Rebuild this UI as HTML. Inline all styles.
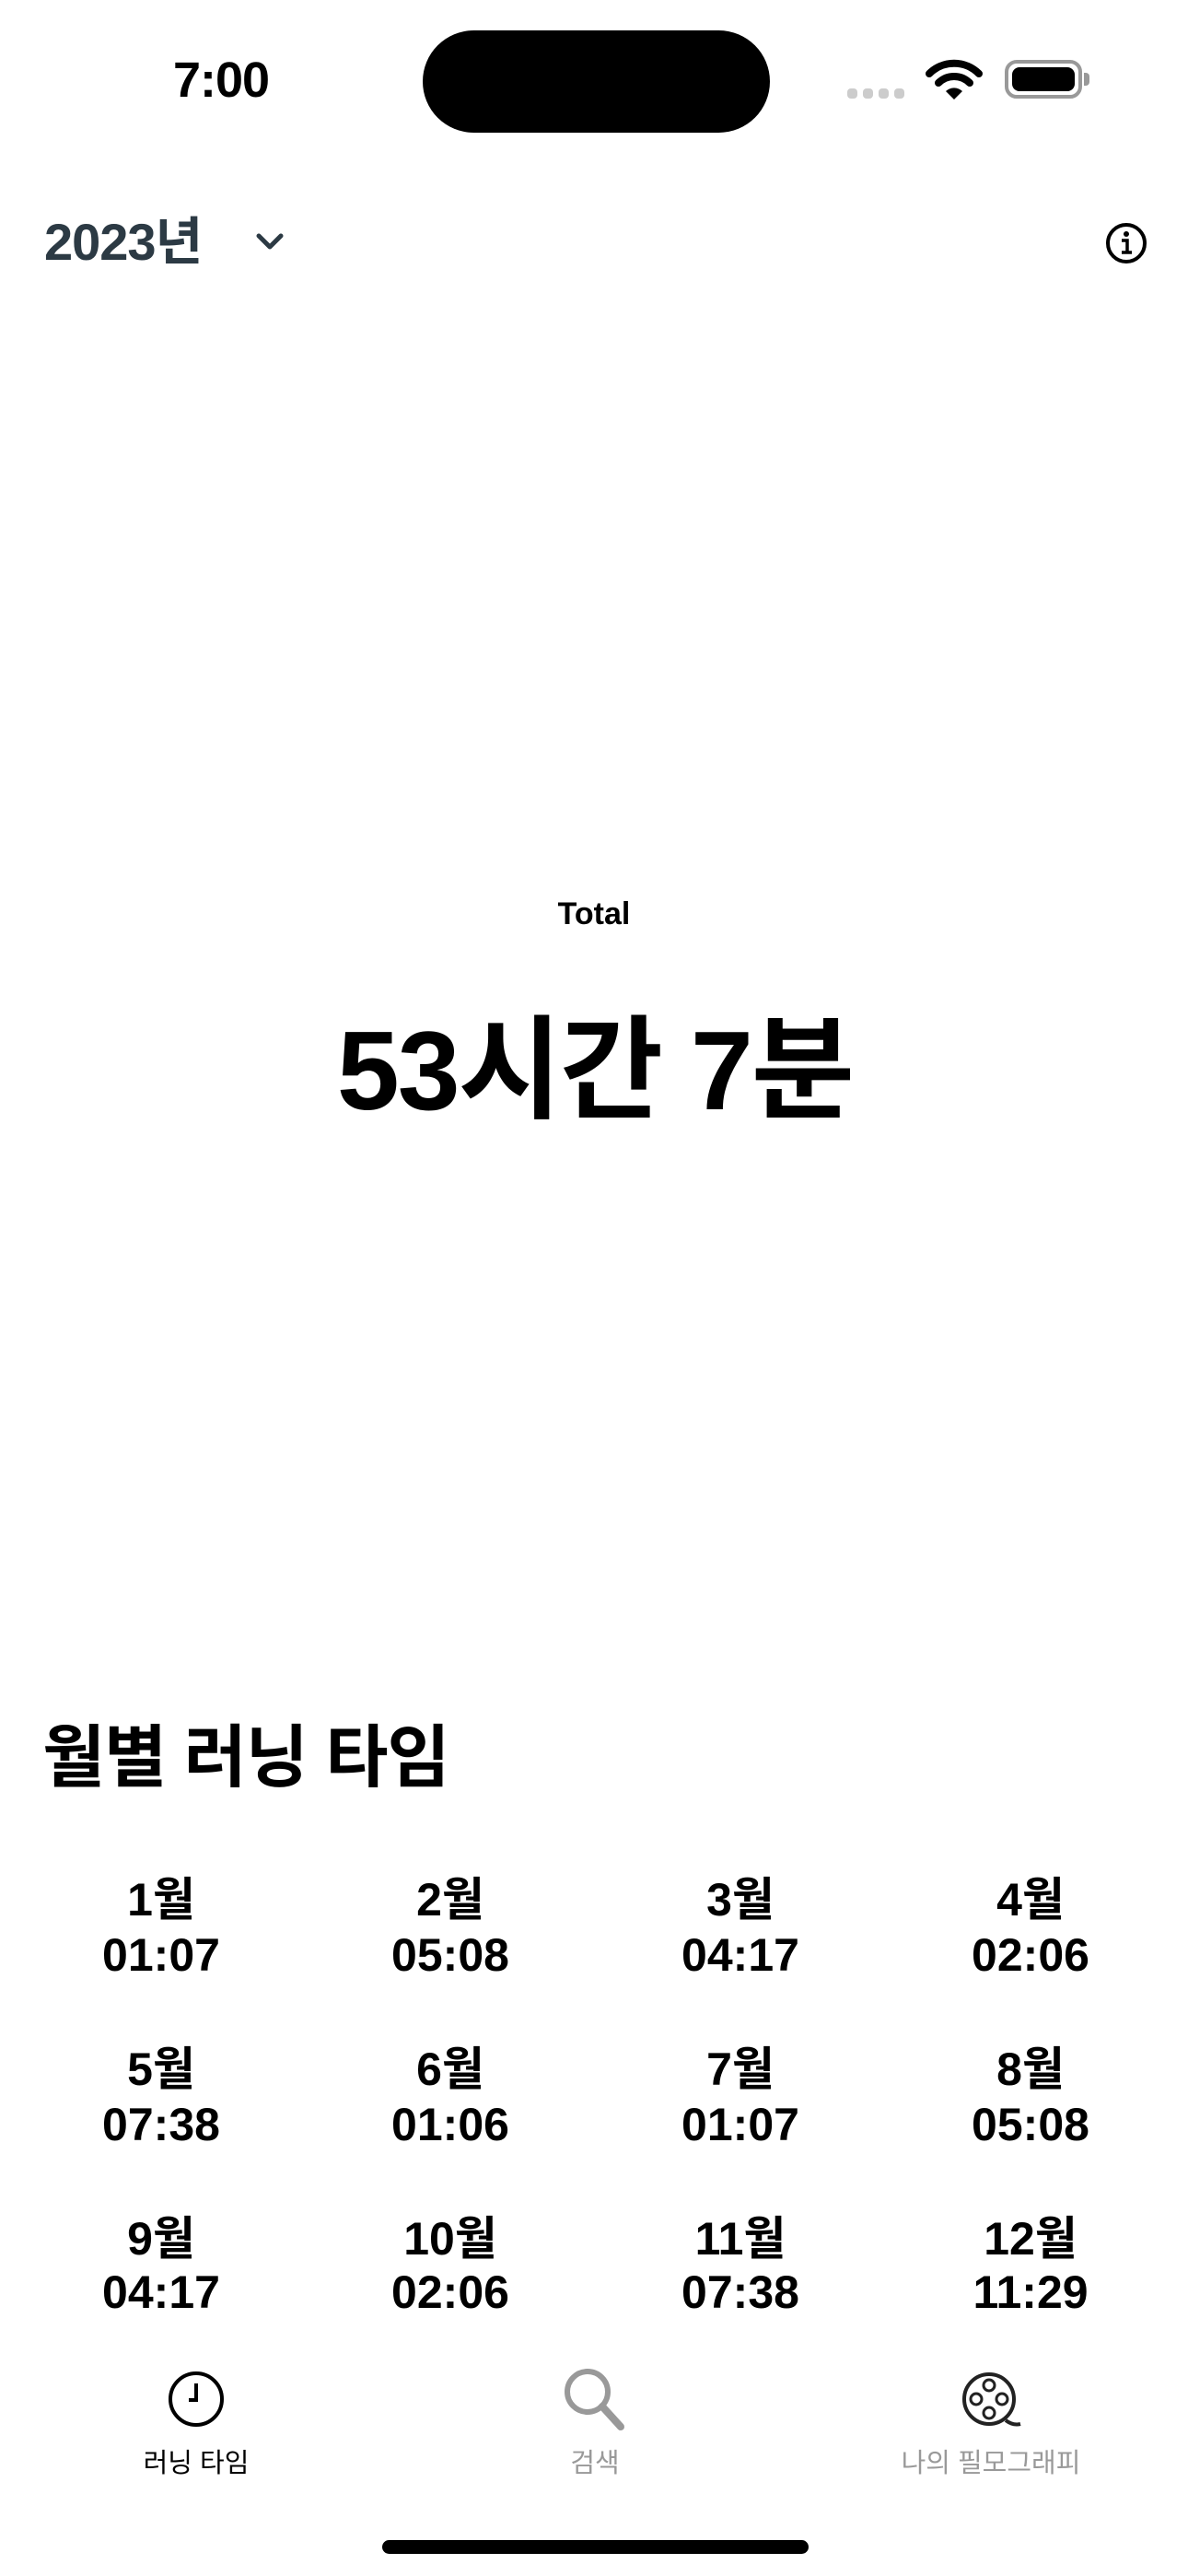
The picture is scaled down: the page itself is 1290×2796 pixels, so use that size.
<!DOCTYPE html>
<html><head><meta charset="utf-8"><style>
*{margin:0;padding:0;box-sizing:border-box}
body{width:1290px;height:2796px;background:#fff;position:relative;overflow:hidden;font-family:"Liberation Sans","Noto Sans CJK KR",sans-serif;color:#000}
.a{position:absolute}
.c{text-align:center;transform:translateX(-50%);white-space:nowrap}
.m{font-weight:700;font-size:50px;line-height:1}
</style></head><body>
<div class="a" style="left:188px;top:56px;font-size:54px;font-weight:600;letter-spacing:-1px">7:00</div>
<div class="a" style="left:459px;top:33px;width:377px;height:111px;background:#000;border-radius:56px"></div>
<div class="a" style="left:920px;top:96px;display:flex;gap:6px"><i style="width:11px;height:11px;background:#ccc;border-radius:4px"></i><i style="width:11px;height:11px;background:#ccc;border-radius:4px"></i><i style="width:11px;height:11px;background:#ccc;border-radius:4px"></i><i style="width:11px;height:11px;background:#ccc;border-radius:4px"></i></div>
<svg class="a" style="left:1005px;top:64px" width="62" height="46" viewBox="0 0 62 46"><path d="M4 16 A38 38 0 0 1 58 16" fill="none" stroke="#000" stroke-width="8" stroke-linecap="round"/><path d="M14 26 A24 24 0 0 1 48 26" fill="none" stroke="#000" stroke-width="8" stroke-linecap="round"/><path d="M31 44 L22 35 A13 13 0 0 1 40 35 Z" fill="#000"/></svg>
<div class="a" style="left:1091px;top:65px;width:84px;height:42px;border:4px solid #999;border-radius:13px;padding:4px"><div style="width:100%;height:100%;background:#000;border-radius:8px"></div></div>
<div class="a" style="left:1177px;top:79px;width:6px;height:14px;background:#999;border-radius:0 4px 4px 0"></div>

<div class="a" style="left:48px;top:218px;font-size:56px;font-weight:700;color:#2c3a44;letter-spacing:-1px">2023년</div>
<svg class="a" style="left:276px;top:250px" width="34" height="24" viewBox="0 0 34 24"><path d="M5 6 L17 18 L29 6" fill="none" stroke="#2c3a44" stroke-width="5" stroke-linecap="round" stroke-linejoin="round"/></svg>
<svg class="a" style="left:1199px;top:240px" width="48" height="48" viewBox="0 0 48 48"><circle cx="24" cy="24" r="20" fill="none" stroke="#000" stroke-width="4"/><circle cx="24" cy="14" r="3" fill="#000"/><path d="M19 21h6v12M19 34h11" fill="none" stroke="#000" stroke-width="3.5"/></svg>

<div class="a c" style="left:645px;top:973px;font-size:34px;font-weight:700">Total</div>
<div class="a c" style="left:646px;top:1095px;font-size:122px;font-weight:700;letter-spacing:-2px;line-height:1.1">53시간 7분</div>

<div class="a" style="left:46px;top:1848px;font-size:74px;font-weight:700;letter-spacing:-1px">월별 러닝 타임</div>

<div class="a c m" style="left:175px;top:2037px">1월</div><div class="a c m" style="left:175px;top:2097px">01:07</div>
<div class="a c m" style="left:489px;top:2037px">2월</div><div class="a c m" style="left:489px;top:2097px">05:08</div>
<div class="a c m" style="left:804px;top:2037px">3월</div><div class="a c m" style="left:804px;top:2097px">04:17</div>
<div class="a c m" style="left:1119px;top:2037px">4월</div><div class="a c m" style="left:1119px;top:2097px">02:06</div>
<div class="a c m" style="left:175px;top:2221px">5월</div><div class="a c m" style="left:175px;top:2281px">07:38</div>
<div class="a c m" style="left:489px;top:2221px">6월</div><div class="a c m" style="left:489px;top:2281px">01:06</div>
<div class="a c m" style="left:804px;top:2221px">7월</div><div class="a c m" style="left:804px;top:2281px">01:07</div>
<div class="a c m" style="left:1119px;top:2221px">8월</div><div class="a c m" style="left:1119px;top:2281px">05:08</div>
<div class="a c m" style="left:175px;top:2405px">9월</div><div class="a c m" style="left:175px;top:2463px">04:17</div>
<div class="a c m" style="left:489px;top:2405px">10월</div><div class="a c m" style="left:489px;top:2463px">02:06</div>
<div class="a c m" style="left:804px;top:2405px">11월</div><div class="a c m" style="left:804px;top:2463px">07:38</div>
<div class="a c m" style="left:1119px;top:2405px">12월</div><div class="a c m" style="left:1119px;top:2463px">11:29</div>

<svg class="a" style="left:182px;top:2573px" width="62" height="62" viewBox="0 0 62 62"><circle cx="31" cy="31" r="28" fill="none" stroke="#000" stroke-width="4"/><path d="M31 14v18h-8" fill="none" stroke="#000" stroke-width="4"/></svg>
<div class="a c" style="left:213px;top:2650px;font-size:29px">러닝 타임</div>
<svg class="a" style="left:610px;top:2568px" width="72" height="72" viewBox="0 0 72 72"><circle cx="28" cy="28" r="22" fill="none" stroke="#999" stroke-width="6"/><path d="M44 44 L64 66" stroke="#999" stroke-width="8" stroke-linecap="round"/></svg>
<div class="a c" style="left:646px;top:2650px;font-size:29px;color:#999">검색</div>
<svg class="a" style="left:1044px;top:2573px" width="66" height="62" viewBox="0 0 66 62"><circle cx="30" cy="31" r="27" fill="none" stroke="#222" stroke-width="4"/><circle cx="30" cy="16" r="6" fill="none" stroke="#222" stroke-width="3"/><circle cx="30" cy="46" r="6" fill="none" stroke="#222" stroke-width="3"/><circle cx="16" cy="31" r="6" fill="none" stroke="#222" stroke-width="3"/><circle cx="44" cy="31" r="6" fill="none" stroke="#222" stroke-width="3"/><path d="M48 54 Q56 60 64 58" fill="none" stroke="#222" stroke-width="4"/></svg>
<div class="a c" style="left:1076px;top:2650px;font-size:29px;color:#999">나의 필모그래피</div>

<div class="a" style="left:415px;top:2757px;width:463px;height:15px;background:#000;border-radius:8px"></div>
</body></html>
